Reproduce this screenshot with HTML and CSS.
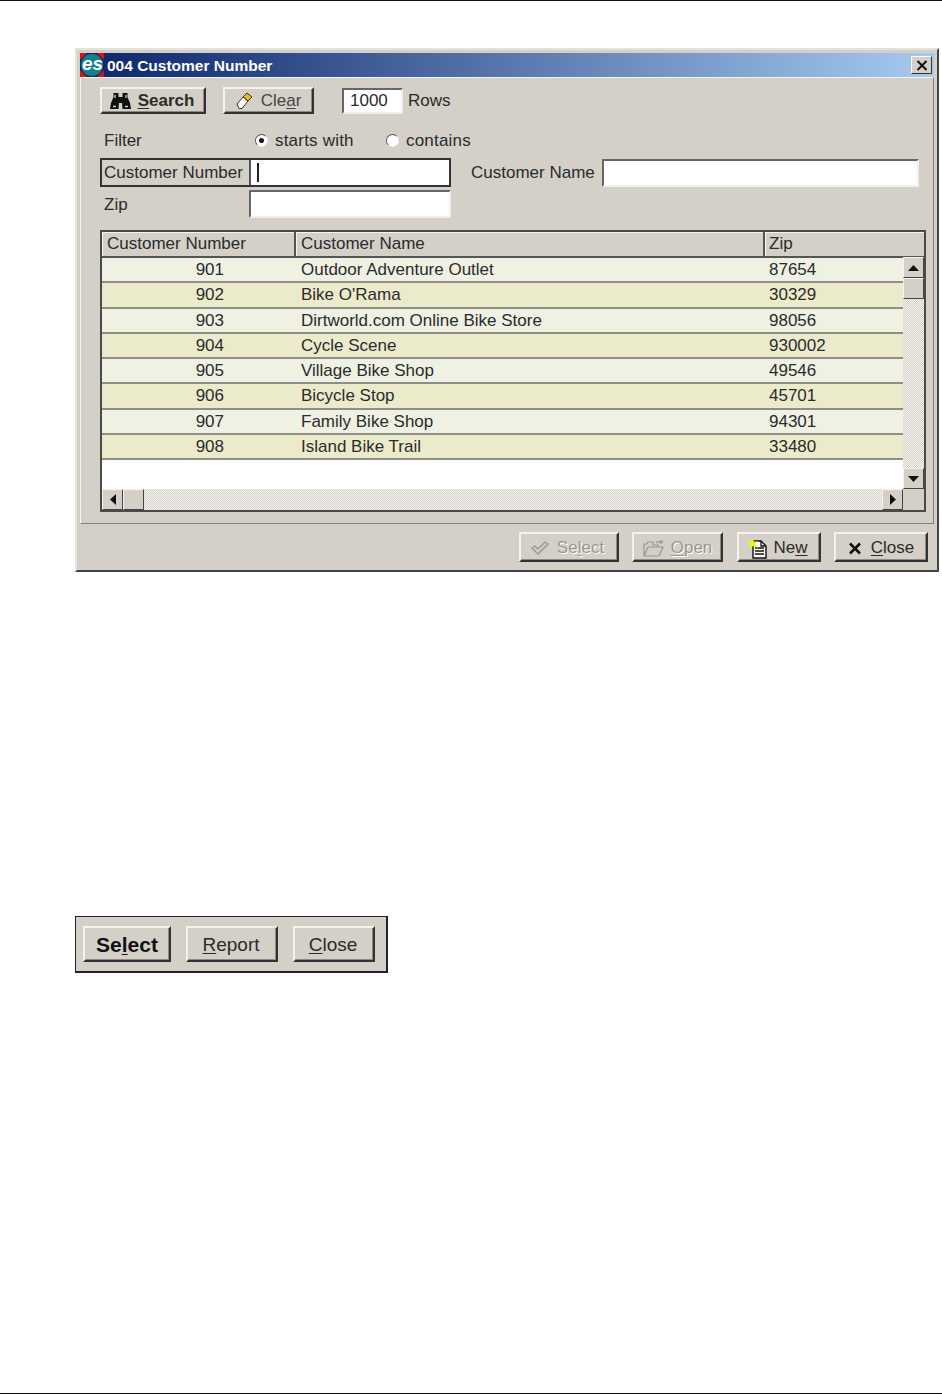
FILE: index.html
```html
<!DOCTYPE html>
<html lang="en">
<head>
  <meta charset="UTF-8">
  <meta name="viewport" content="width=device-width, initial-scale=1.0">
  <title>004 Customer Number</title>
  <link rel="stylesheet" href="styles.css">
</head>
<body>
  <div class="rule"></div>

  <div class="window">
    <div class="titlebar">
      <svg class="logo" width="24" height="24" viewBox="0 0 24 24">
        <rect width="24" height="24" fill="#20205a"/>
        <path d="M0 0h7L0 7zM24 0v7L17 0zM0 24v-7l7 7zM24 24h-7l7-7z" fill="#d01818"/>
        <circle cx="12" cy="12" r="11" fill="#12808a"/>
        <text x="2" y="17" class="logo-text">es</text>
      </svg>
      <span class="title-text">004 Customer Number</span>
      <button class="title-close">
        <svg width="12" height="11" viewBox="0 0 12 11"><path d="M1.5 1l9 9M10.5 1l-9 9" stroke="#111" stroke-width="2" fill="none"/></svg>
      </button>
    </div>

    <div class="panel">
      <div class="toolbar">
        <button class="btn btn-search">
          <svg width="21" height="17" viewBox="0 0 21 17">
            <path d="M3.500 1h5v4h4V1h5v4L20 11l1 6h-8.500l-.5-6H9l-.5 6H0l1-6 2.500-6z" fill="#111"/>
            <path d="M3 14.500h3M15 14.500h3M5 3v3M16 3v3" stroke="#ccc" stroke-width="1.300"/>
          </svg>
          <b><u>S</u>earch</b>
        </button>
        <button class="btn btn-clear">
          <svg width="17" height="18" viewBox="0 0 17 18">
            <path d="M1 12l6-7 5 4-6 7.500H3z" fill="#fff" stroke="#333"/>
            <path d="M7 5l4-4 5 4-4 4z" fill="#e8b818" stroke="#333"/>
          </svg>
          <span>Cle<u>a</u>r</span>
        </button>
        <div class="field field-rows">1000</div>
        <span class="rows-label">Rows</span>
      </div>

      <div class="filter-row">
        <span class="filter-label">Filter</span>
        <label class="radio-option radio-starts"><i class="radio radio-on"></i>starts with</label>
        <label class="radio-option"><i class="radio"></i>contains</label>
      </div>

      <div class="search-row">
        <div class="focus-group">
          <span class="focus-label">Customer Number</span>
          <div class="focus-input"><i class="caret"></i></div>
        </div>
        <span class="name-label">Customer Name</span>
        <div class="field field-name"></div>
      </div>

      <div class="zip-row">
        <span class="zip-label">Zip</span>
        <div class="field field-zip"></div>
      </div>

      <div class="grid">
        <div class="grid-head">
          <div class="head-cell">Customer Number</div>
          <div class="head-cell">Customer Name</div>
          <div class="head-cell">Zip</div>
        </div>
        <div class="grid-body">
          <div class="grid-rows">
            <div class="row"><span class="c-num">901</span><span class="c-name">Outdoor Adventure Outlet</span><span class="c-zip">87654</span></div>
            <div class="row"><span class="c-num">902</span><span class="c-name">Bike O'Rama</span><span class="c-zip">30329</span></div>
            <div class="row"><span class="c-num">903</span><span class="c-name">Dirtworld.com Online Bike Store</span><span class="c-zip">98056</span></div>
            <div class="row"><span class="c-num">904</span><span class="c-name">Cycle Scene</span><span class="c-zip">930002</span></div>
            <div class="row"><span class="c-num">905</span><span class="c-name">Village Bike Shop</span><span class="c-zip">49546</span></div>
            <div class="row"><span class="c-num">906</span><span class="c-name">Bicycle Stop</span><span class="c-zip">45701</span></div>
            <div class="row"><span class="c-num">907</span><span class="c-name">Family Bike Shop</span><span class="c-zip">94301</span></div>
            <div class="row"><span class="c-num">908</span><span class="c-name">Island Bike Trail</span><span class="c-zip">33480</span></div>
          </div>
          <div class="vscroll">
            <div class="sb-btn"><svg width="11" height="6" viewBox="0 0 11 6"><path d="M5.500 0L11 6H0z" fill="#111"/></svg></div>
            <div class="sb-btn"></div>
            <div class="sb-track"></div>
            <div class="sb-btn"><svg width="11" height="6" viewBox="0 0 11 6"><path d="M5.500 6L11 0H0z" fill="#111"/></svg></div>
          </div>
        </div>
        <div class="hscroll">
          <div class="sb-btn"><svg width="6" height="11" viewBox="0 0 6 11"><path d="M0 5.500L6 0v11z" fill="#111"/></svg></div>
          <div class="sb-btn"></div>
          <div class="sb-track"></div>
          <div class="sb-btn"><svg width="6" height="11" viewBox="0 0 6 11"><path d="M6 5.500L0 0v11z" fill="#111"/></svg></div>
          <div class="sb-corner"></div>
        </div>
      </div>
    </div>

    <div class="actions">
      <button class="btn btn-disabled btn-select">
        <svg width="18" height="14" viewBox="0 0 18 14"><path d="M1 7l3-2 3 3 7-7 3 2-10 10z" fill="none" stroke="#9a968e" stroke-width="1.300"/></svg>
        <span>Se<u>l</u>ect</span>
      </button>
      <button class="btn btn-disabled btn-open">
        <svg width="22" height="17" viewBox="0 0 22 17"><path d="M1 16V4h3l1-2h5v3h5v2M1 16l4-9h15l-4 9zM13 3c2-2 4-2 6-1M19 0v3h-3" fill="none" stroke="#9a968e" stroke-width="1.200"/></svg>
        <span><u>O</u>pen</span>
      </button>
      <button class="btn btn-new">
        <svg width="21" height="21" viewBox="0 0 21 21">
          <path d="M6 3h8l5 5v12H6z" fill="#fff" stroke="#111" stroke-width="1.400"/>
          <path d="M14 3v5h5M8 10h9M8 13h9M8 16h9" fill="none" stroke="#111" stroke-width="1.300"/>
          <path d="M6 0l1 4 4-1-3 3 3 4-5-2-4 3 1-5-3-2 5-1z" fill="#f4f020"/>
        </svg>
        <span>Ne<u>w</u></span>
      </button>
      <button class="btn btn-close">
        <svg width="14" height="13" viewBox="0 0 14 13"><path d="M2 1.500l10 10M12 1.500l-10 10" stroke="#111" stroke-width="2.600" fill="none"/></svg>
        <span><u>C</u>lose</span>
      </button>
    </div>
  </div>

  <div class="bar">
    <button class="btn bar-select"><b>Se<u>l</u>ect</b></button>
    <button class="btn bar-report"><span><u>R</u>eport</span></button>
    <button class="btn bar-close"><span><u>C</u>lose</span></button>
  </div>

  <div class="rule rule-bottom"></div>
</body>
</html>
```

FILE: styles.css
```css
* { box-sizing: border-box; }

body {
  margin: 0;
  height: 1394px;
  display: flex;
  flex-direction: column;
  background: #fff;
  color: #2b2b2b;
  font-family: "Liberation Sans", Arial, sans-serif;
  font-size: 17px;
  overflow: hidden;
}
u { text-underline-offset: 2px; text-decoration-thickness: 1px; }

.rule { height: 1px; background: #111; flex: none; }
.rule-bottom { margin-top: auto; }

/* dialog */
.window {
  flex: none;
  width: 864px;
  height: 524px;
  margin: 47px 0 0 75px;
  padding: 3px;
  background: #d4d0c8;
  border: 2px solid;
  border-color: #e4e2dc #444 #444 #e4e2dc;
}
.titlebar {
  height: 24px;
  display: flex;
  align-items: center;
  background: linear-gradient(90deg, #0a246a, #a6caf0);
  color: #fff;
}
.logo { flex: none; }
.logo-text { font: italic bold 19px "Liberation Sans", sans-serif; fill: #fff; }
.title-text { margin-left: 3px; padding-top: 1px; font-weight: 700; font-size: 15.5px; }
.title-close {
  margin: 0 2px 0 auto;
  width: 21px;
  height: 18px;
  padding: 0;
  display: flex;
  align-items: center;
  justify-content: center;
  background: #d4d0c8;
  border: 1px solid;
  border-color: #fff #333 #333 #fff;
}

.panel {
  height: 447px;
  padding: 9px 7px 0 19px;
  border: 1px solid;
  border-color: #f4f3ef #808080 #808080 #f4f3ef;
}

/* buttons */
.btn {
  display: flex;
  align-items: center;
  justify-content: center;
  gap: 6px;
  padding: 0;
  font: inherit;
  color: inherit;
  background: #d4d0c8;
  border: 2px solid;
  border-color: #f4f3ef #333 #333 #f4f3ef;
  box-shadow: inset -1px -1px 0 #8a8a84;
}
.btn-search { width: 106px; height: 27px; margin-right: 17px; gap: 7px; padding-right: 2px; }
.btn-clear { width: 91px; height: 27px; gap: 8px; margin-right: 28px; color: #444; }
.btn-disabled { color: #9a968e; text-shadow: 1px 1px 0 #fff; }
.btn-select { width: 100px; gap: 8px; padding-right: 2px; }
.btn-open { width: 91px; }
.btn-new { width: 84px; gap: 5px; padding-right: 2px; }
.btn-close { width: 94px; gap: 9px; }

/* form rows */
.toolbar, .filter-row, .search-row, .zip-row { display: flex; align-items: center; }
.toolbar { height: 27px; }
.field {
  background: #fff;
  border: 2px solid;
  border-color: #666 #eee #eee #666;
}
.field-rows { width: 61px; height: 26px; padding-left: 6px; line-height: 21px; }
.rows-label { margin-left: 5px; }

.filter-row { height: 20px; margin-top: 16px; padding-top: 1px; }
.filter-label { width: 155px; padding-left: 4px; }
.radio-option { display: flex; align-items: center; gap: 7px; letter-spacing: .2px; }
.radio-starts { width: 131px; }
.radio {
  width: 13px;
  height: 13px;
  flex: none;
  display: flex;
  align-items: center;
  justify-content: center;
  border-radius: 50%;
  background: #fff;
  border: 1px solid;
  border-color: #555 #eee #eee #555;
}
.radio-on::after {
  content: "";
  width: 5px;
  height: 5px;
  border-radius: 50%;
  background: #111;
}

.search-row { height: 29px; margin-top: 8px; }
.focus-group {
  width: 351px;
  height: 29px;
  display: flex;
  border: 2px solid #333;
}
.focus-label {
  width: 149px;
  padding-left: 2px;
  line-height: 26px;
  white-space: nowrap;
  border-right: 2px solid #555;
}
.focus-input { flex: 1; background: #fff; padding: 3px 0 3px 6px; }
.caret { display: block; width: 2px; height: 19px; background: #222; }
.name-label { width: 131px; margin-left: 20px; white-space: nowrap; }
.field-name { width: 317px; height: 28px; }

.zip-row { height: 28px; margin-top: 3px; }
.zip-label { width: 149px; padding: 1px 0 0 4px; }
.field-zip { width: 202px; height: 28px; }

/* customer table */
.grid {
  width: 826px;
  height: 282px;
  margin-top: 12px;
  background: #fff;
  border: 2px solid #4a4a4a;
}
.grid-head {
  height: 25px;
  display: grid;
  grid-template-columns: 194px 469px 1fr;
  background: #d4d0c8;
}
.head-cell {
  padding-left: 5px;
  line-height: 24px;
  border-right: 2px solid #555;
  border-bottom: 2px solid #555;
  box-shadow: inset 1px 1px 0 #f4f3ef;
}
.head-cell:last-child { padding-left: 4px; border-right: 0; }
.grid-body { height: 232px; display: flex; }
.grid-rows { width: 801px; padding-top: 1px; }
.row {
  height: 25.25px;
  padding-top: 1px;
  display: grid;
  grid-template-columns: 193px 469px 1fr;
  align-items: center;
  background: #eff1e3;
  border-bottom: 2px solid #8e8e86;
}
.row:nth-child(even) { background: #ebebcb; }
.c-num { padding-right: 71px; text-align: right; }
.c-name { padding-left: 6px; }
.c-zip { padding-left: 5px; }

/* scrollbars */
.sb-btn {
  flex: none;
  width: 21px;
  height: 21px;
  display: flex;
  align-items: center;
  justify-content: center;
  background: #d4d0c8;
  border: 1px solid;
  border-color: #f4f3ef #444 #444 #f4f3ef;
}
.sb-track {
  flex: 1;
  background: repeating-conic-gradient(#d4d0c8 0 25%, #f6f5f2 0 50%) 0 0 / 2px 2px;
}
.vscroll { width: 21px; display: flex; flex-direction: column; }
.hscroll { height: 21px; display: flex; }
.sb-corner { width: 21px; background: #d4d0c8; }

.actions {
  display: flex;
  justify-content: flex-end;
  gap: 13.5px;
  padding: 8px 6px 0 0;
}
.actions .btn { height: 30px; padding-top: 2px; }

/* second toolbar */
.bar {
  flex: none;
  width: 313px;
  height: 57px;
  margin: 344px 0 0 75px;
  display: flex;
  gap: 15px;
  padding: 9px 0 0 7px;
  background: #d4d0c8;
  border: 1px solid #222;
  border-width: 1px 2px 2px 1px;
}
.bar .btn { height: 36px; padding: 1px 2px 0 0; font-size: 19px; }
.bar .bar-select { width: 88px; padding: 1px 0 0; font-size: 21px; color: #111; }
.bar-report { width: 92px; }
.bar-close { width: 82px; }
```
